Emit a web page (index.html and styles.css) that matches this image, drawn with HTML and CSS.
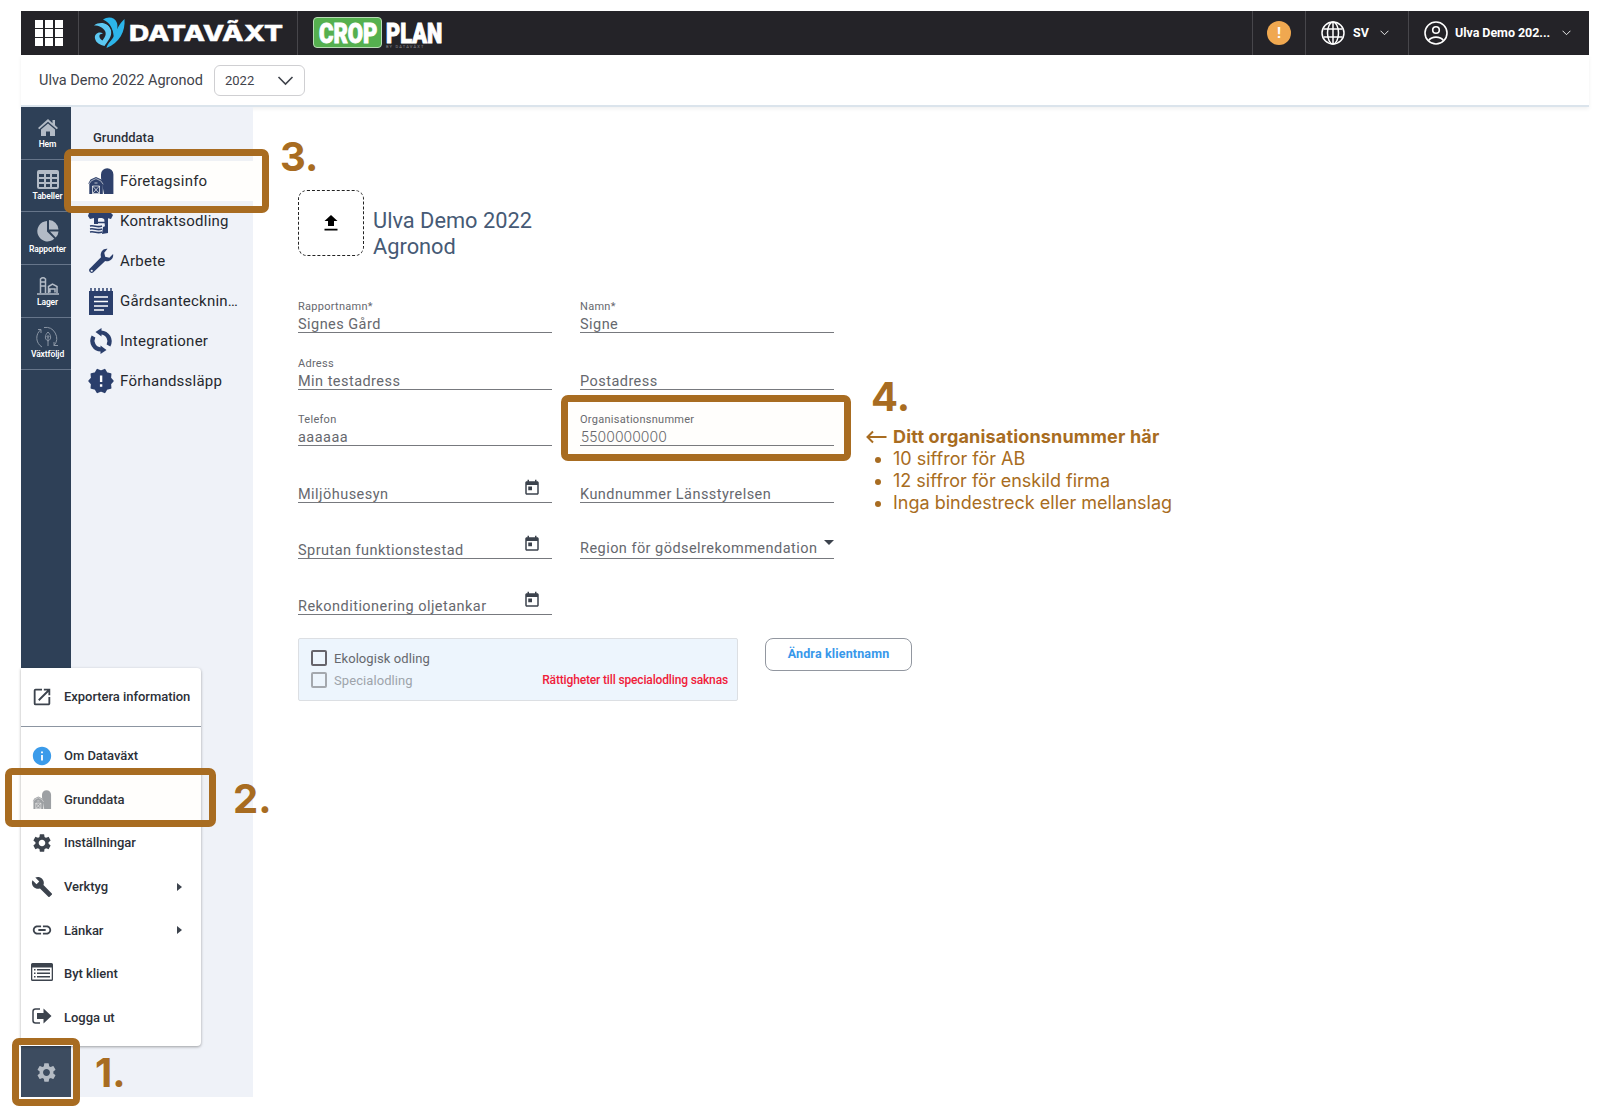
FILE: index.html
```html
<!DOCTYPE html>
<html lang="sv">
<head>
    <meta charset="UTF-8">
    <meta name="viewport" content="width=device-width, initial-scale=1.0">
    <title>Grunddata - Företagsinfo</title>
    <link rel="stylesheet" href="styles.css">
</head>
<body>
    <svg class="sprite" width="0" height="0">
        <symbol id="barn" viewBox="0 0 26 26">
            <path d="M13 10V6.500a6.200 6.200 0 0 1 12.400 0V26H16z"/>
            <path d="M.3 15.500 2.500 11.500 8 9l5.500 2.500 2.200 4-.9.700V26H1.300v-9.800z"/>
            <path d="M.8 16.300 3.300 12.800 8 10.600l4.700 2.200 2.500 3.500" fill="none" stroke="#fff" stroke-width=".6"/>
            <path d="M4.500 18h7v7.500h-7zl7 7.500m0-7.500-7 7.500M6.500 15h3" fill="none" stroke="#fff" stroke-width=".7"/>
        </symbol>
        <symbol id="gear" viewBox="0 0 24 24">
            <path d="M19.140 12.940c.04-.3.060-.61.060-.94 0-.32-.02-.64-.07-.94l2.030-1.580a.49.49 0 0 0 .12-.61l-1.920-3.320a.488.488 0 0 0-.59-.22l-2.390.96c-.5-.38-1.030-.7-1.620-.94l-.36-2.540a.484.484 0 0 0-.48-.41h-3.840c-.24 0-.43.17-.47.41l-.36 2.540c-.59.24-1.130.57-1.620.94l-2.390-.96c-.22-.08-.47 0-.59.22L2.740 8.870c-.12.21-.08.47.12.61l2.030 1.580c-.05.3-.09.63-.09.94s.02.64.07.94l-2.030 1.580a.49.49 0 0 0-.12.61l1.920 3.320c.12.22.37.29.59.22l2.390-.96c.5.38 1.030.7 1.620.94l.36 2.540c.05.24.24.41.48.41h3.840c.24 0 .44-.17.47-.41l.36-2.540c.59-.24 1.130-.56 1.620-.94l2.390.96c.22.08.47 0 .59-.22l1.920-3.320c.12-.22.07-.47-.12-.61l-2.010-1.580zM12 15.600c-1.980 0-3.600-1.620-3.600-3.600s1.620-3.600 3.600-3.600 3.600 1.620 3.600 3.600-1.620 3.600-3.600 3.600z"/>
        </symbol>
        <symbol id="calendar" viewBox="0 0 24 24">
            <path d="M19 3h-1V1h-2v2H8V1H6v2H5c-1.110 0-1.990.9-1.990 2L3 19c0 1.100.89 2 2 2h14c1.100 0 2-.9 2-2V5c0-1.100-.9-2-2-2zm0 16H5V8h14v11zM7 10h5v5H7z"/>
        </symbol>
        <symbol id="chevron" viewBox="0 0 16 10">
            <path d="M1 1l7 7 7-7" fill="none" stroke="currentColor" stroke-width="1.600"/>
        </symbol>
    </svg>

    <div class="app">
        <header class="topbar">
            <div class="apps">
                <i></i><i></i><i></i><i></i><i></i><i></i><i></i><i></i><i></i>
            </div>
            <div class="brand">
                <svg width="190" height="34" viewBox="0 0 190 34">
                    <g fill="#2cb5ea">
                        <path d="M9 3.500C14 0 21 1 23 7c1.500 5.500-1 11-3 16.500C19.500 14 17 7 9 3.500z"/>
                        <path d="M30.500 3c1 12-5 24-18 29 1-5 5-7 7.500-12C22 15 25 8 30.500 3z"/>
                        <path d="M0 9.500C6 5 15 7 17 14c1.500 7-3.500 11-6.500 16-4.500-1-8.500-3-9.500-7.500C0 18 5 15 9 17.500c-3 .3-4 1.500-3.500 3.500.3 1.500 1.500 2.500 3 3.500 3-4 4-6.500 2.500-9.500C9 11.500 5 9.500 0 9.500z" fill="#5cc8f2"/>
                        <path d="M8 5.500c7 2 11 8 10.500 15" fill="none" stroke="#242328" stroke-width="1"/>
                    </g>
                    <text class="brand-name" x="35" y="24.500" textLength="154" lengthAdjust="spacingAndGlyphs">DATAVÃXT</text>
                </svg>
            </div>
            <div class="product">
                <div class="crop"><svg width="61" height="29" viewBox="0 0 61 29"><text class="product-name" transform="scale(.74 1)" x="0" y="24.500" textLength="79" lengthAdjust="spacingAndGlyphs">CROP</text></svg></div>
                <div class="plan">
                    <svg width="60" height="27" viewBox="0 0 60 27"><text class="product-name" transform="scale(.74 1)" x="0" y="25.500" textLength="76" lengthAdjust="spacingAndGlyphs">PLAN</text></svg>
                    <span>BY DATAVÄXT</span>
                </div>
            </div>
            <div class="spacer"></div>
            <div class="alert-cell"><span class="alert">!</span></div>
            <div class="lang">
                <svg width="24" height="24" viewBox="0 0 24 24" fill="none" stroke="#fff" stroke-width="1.500">
                    <circle cx="12" cy="12" r="11"/>
                    <ellipse cx="12" cy="12" rx="5.500" ry="11"/>
                    <path d="M12 1v22M2.500 8h19M2.500 16h19"/>
                </svg>
                <span>SV</span>
                <svg class="chev" width="9" height="6"><use href="#chevron"/></svg>
            </div>
            <div class="user">
                <svg width="24" height="24" viewBox="0 0 24 24" fill="none" stroke="#fff" stroke-width="1.600">
                    <circle cx="12" cy="12" r="11"/>
                    <circle cx="12" cy="9" r="3.300"/>
                    <path d="M4.500 19.500c3.500-4.500 11.500-4.500 15 0"/>
                </svg>
                <span>Ulva Demo 202...</span>
                <svg class="chev" width="9" height="6"><use href="#chevron"/></svg>
            </div>
        </header>

        <div class="subbar">
            <span>Ulva Demo 2022 Agronod</span>
            <div class="year">2022 <svg width="17" height="10"><use href="#chevron"/></svg></div>
        </div>

        <div class="main">
            <nav class="rail">
                <a class="rail-item">
                    <svg width="20" height="18" viewBox="0 0 20 18"><path d="M10 0 0 9l1.300 1.300L10 2.700l8.700 7.600L20 9l-3-2.700V1h-2.500v3.200z"/><path d="M3 10.500 10 4.500l7 6V17h-5v-4.500H8V17H3z"/></svg>
                    <span>Hem</span>
                </a>
                <a class="rail-item">
                    <svg width="22" height="19" viewBox="0 0 22 19" fill-rule="evenodd"><path d="M2 0h18q2 0 2 2v15q0 2-2 2H2q-2 0-2-2V2q0-2 2-2zM2 4v3h5V4zm7 0v3h4V4zm6 0v3h5V4zM2 9v3h5V9zm7 0v3h4V9zm6 0v3h5V9zM2 14v3h5v-3zm7 0v3h4v-3zm6 0v3h5v-3z"/></svg>
                    <span>Tabeller</span>
                </a>
                <a class="rail-item">
                    <svg width="22" height="22" viewBox="0 0 22 22"><path d="M10 1v10.500l7.300 7.300A10.200 10.200 0 1 1 10 1z"/><path d="M12 0a10 10 0 0 1 9.500 9.500H12z"/><path d="M13 11.500h8.500a9 9 0 0 1-2.800 6z"/></svg>
                    <span>Rapporter</span>
                </a>
                <a class="rail-item">
                    <svg width="22" height="18" viewBox="0 0 22 18" fill="none" stroke="#b3bbc6" stroke-width="1.500"><path d="M0 17h22M3.500 16V2q2.500-2.500 5 0v14M3.500 5h5M3.500 9h5M11.500 16V9.500l4-2.500 4.500 2.500V16M13 15.500v-3.500h5v3.500"/></svg>
                    <span>Lager</span>
                </a>
                <a class="rail-item dim">
                    <svg width="24" height="24" viewBox="0 0 24 24" fill="none" stroke="#b3bbc6" stroke-width="1"><path d="M5 3.500A10.500 10.500 0 0 0 6 21M8 1.500a11 11 0 0 1 10 18M18 19.500v-3.500m0 3.500h4M5 3.500H2m3 0V7M12 20v-6M12 15c-4-2-3-6 0-9 3 3 4 7 0 9zM12 9v6M10.500 10l1.500 1.500 1.500-1.500"/></svg>
                    <span>Växtföljd</span>
                </a>
                <a class="rail-settings"><svg width="23" height="23"><use href="#gear"/></svg></a>
            </nav>

            <aside class="subnav">
                <h2>Grunddata</h2>
                <a class="active"><svg width="26" height="26"><use href="#barn"/></svg>Företagsinfo</a>
                <a>
                    <svg width="26" height="26" viewBox="0 0 26 26"><path d="M1 5 6 1l5 2 5-2 5 2 4 4-2 4-4-1-1 2-4-2h-3l-3 2-2-2-4 1-2-3z"/><path d="M6 10h4v6H6zm10-1h4v9l-3 1z"/><path d="M9 14.500h8" stroke="#2b3f6c" stroke-width="1.500"/><path d="M2 18c5-1 7 2 12 0M2 21c5-1 7 2 12 0M2 24c5-1 7 2 12 0" fill="none" stroke="#2b3f6c" stroke-width="1.600"/><path d="M15 19l5-2v8l-6 1z"/></svg>
                    Kontraktsodling
                </a>
                <a>
                    <svg width="28" height="28" viewBox="0 0 28 28"><path d="M27 6.500c1 5-4 9-8.500 7.500L5.500 26.500a3 3 0 0 1-4-4L14 10C12.500 5 16 0 21 .8L17.500 5l1 4.500 4.500 1z"/><circle cx="4" cy="24.500" r="1.200" fill="#eff2f8"/></svg>
                    Arbete
                </a>
                <a>
                    <svg width="26" height="28" viewBox="0 0 26 28"><path d="M1 4h24v24H1z"/><path d="M3 1v4M7 1v4M11 1v4M15 1v4M19 1v4M23 1v4" stroke="#2b3f6c" stroke-width="1.500"/><path d="M6 10h14M6 14.500h14M6 19h14M6 23h10" stroke="#fff" stroke-width="1.500"/></svg>
                    Gårdsantecknin…
                </a>
                <a>
                    <svg width="26" height="26" viewBox="0 0 26 26"><path d="M13 4.500A8.800 8.800 0 0 1 20.500 17.500M13 21.500A8.800 8.800 0 0 1 5.500 8.500" fill="none" stroke="#2b3f6c" stroke-width="4.200"/><path d="M13.500 0v8.500L7.500 4zM12.500 26v-8.500l6 4.500z"/></svg>
                    Integrationer
                </a>
                <a>
                    <svg width="26" height="26" viewBox="0 0 24 24"><path d="m23 12-2.440-2.780.34-3.680-3.610-.82-1.890-3.180L12 3 8.600 1.540 6.710 4.720l-3.610.81.34 3.680L1 12l2.440 2.780-.34 3.690 3.610.82 1.890 3.180L12 21l3.400 1.460 1.890-3.180 3.610-.82-.34-3.680z" stroke="#2b3f6c" stroke-width="1.500" stroke-linejoin="round"/><path d="M11 7h2.200v6H11zm0 8h2.200v2.200H11z" fill="#fff"/></svg>
                    Förhandssläpp
                </a>
            </aside>

            <main class="content">
                <div class="company">
                    <div class="upload"><svg width="14" height="17" viewBox="0 0 14 17"><path d="M4 11V6H.5L7 0l6.500 6H10v5zM.5 13.700h13v1.800H.5z"/></svg></div>
                    <h1>Ulva Demo 2022 Agronod</h1>
                </div>

                <div class="form">
                    <div class="field"><label>Rapportnamn*</label><span>Signes Gård</span></div>
                    <div class="field"><label>Namn*</label><span>Signe</span></div>
                    <div class="field"><label>Adress</label><span>Min testadress</span></div>
                    <div class="field"><span>Postadress</span></div>
                    <div class="field"><label>Telefon</label><span>aaaaaa</span></div>
                    <div class="field"><label>Organisationsnummer</label><span class="orgnr">5500000000</span></div>
                    <div class="field date"><span>Miljöhusesyn</span><svg width="18" height="18"><use href="#calendar"/></svg></div>
                    <div class="field"><span>Kundnummer Länsstyrelsen</span></div>
                    <div class="field date"><span>Sprutan funktionstestad</span><svg width="18" height="18"><use href="#calendar"/></svg></div>
                    <div class="field select"><span>Region för gödselrekommendation</span><i class="caret"></i></div>
                    <div class="field date"><span>Rekonditionering oljetankar</span><svg width="18" height="18"><use href="#calendar"/></svg></div>
                </div>

                <div class="bottom">
                    <div class="options">
                        <div class="option"><i class="box"></i><span>Ekologisk odling</span></div>
                        <div class="option disabled"><i class="box"></i><span>Specialodling</span><em>Rättigheter till specialodling saknas</em></div>
                    </div>
                    <button class="rename">Ändra klientnamn</button>
                </div>
            </main>
        </div>
    </div>

    <!-- settings menu opened from the gear button -->
    <div class="menu">
        <a class="export"><svg width="22" height="22" viewBox="0 0 24 24"><path d="M19 19H5V5h7V3H5a2 2 0 0 0-2 2v14a2 2 0 0 0 2 2h14c1.100 0 2-.9 2-2v-7h-2v7zM14 3v2h3.590l-9.830 9.830 1.410 1.410L19 6.410V10h2V3h-7z"/></svg>Exportera information</a>
        <a><svg width="22" height="22" viewBox="0 0 24 24" fill="#3b9bea"><path d="M12 2C6.480 2 2 6.480 2 12s4.480 10 10 10 10-4.480 10-10S17.520 2 12 2zm1 15h-2v-6h2v6zm0-8h-2V7h2v2z"/></svg>Om Dataväxt</a>
        <a><svg class="faded" width="22" height="19"><use href="#barn"/></svg>Grunddata</a>
        <a><svg width="22" height="22"><use href="#gear"/></svg>Inställningar</a>
        <a><svg width="22" height="22" viewBox="0 0 24 24"><path d="m22.700 19-9.100-9.100c.9-2.300.4-5-1.500-6.900-2-2-5-2.400-7.400-1.300L9 6 6 9 1.600 4.700C.4 7.100.9 10.100 2.900 12.100c1.900 1.900 4.600 2.400 6.900 1.500l9.100 9.100c.4.400 1 .4 1.400 0l2.300-2.300c.5-.4.5-1.100.1-1.400z"/></svg>Verktyg<i class="more"></i></a>
        <a><svg width="22" height="22" viewBox="0 0 24 24"><path d="M3.900 12c0-1.710 1.390-3.100 3.100-3.100h4V7H7c-2.760 0-5 2.240-5 5s2.240 5 5 5h4v-1.900H7c-1.710 0-3.100-1.390-3.100-3.100zM8 13h8v-2H8v2zm9-6h-4v1.900h4c1.710 0 3.100 1.390 3.100 3.100s-1.390 3.100-3.100 3.100h-4V17h4c2.760 0 5-2.240 5-5s-2.240-5-5-5z"/></svg>Länkar<i class="more"></i></a>
        <a><svg class="list" width="22" height="18" viewBox="0 0 22 18"><path fill-rule="evenodd" d="M1.500 0h19Q22 0 22 1.500v15q0 1.500-1.500 1.500h-19Q0 18 0 16.500v-15Q0 0 1.500 0zM1.300 4.500v12h19.400v-12z"/><path d="M3 6h1.500v1.500H3zm3 0h13v1.500H6zM3 9.500h1.500V11H3zm3 0h13V11H6zM3 13h1.500v1.500H3zm3 0h13v1.500H6z"/></svg>Byt klient</a>
        <a><svg class="list" width="20" height="16" viewBox="0 0 20 16"><path d="M8 1H3.500Q1 1 1 3.500v9Q1 15 3.500 15H8" fill="none" stroke="#3c434d" stroke-width="1.500"/><path d="M5 5h6.500V.5L19.500 8l-8 7.500V11H5z"/></svg>Logga ut</a>
    </div>

    <!-- step-by-step annotations -->
    <div class="frame frame-1"></div>
    <div class="frame frame-2"></div>
    <div class="frame frame-3"></div>
    <div class="frame frame-4"></div>
    <div class="step step-1">1.</div>
    <div class="step step-2">2.</div>
    <div class="step step-3">3.</div>
    <div class="step step-4">4.</div>
    <div class="note">
        <strong><svg width="21" height="14" viewBox="0 0 21 14"><path d="M20.500 7H1.500M7 1.500 1.500 7 7 12.500" fill="none" stroke="#a86c21" stroke-width="2"/></svg>Ditt organisationsnummer här</strong>
        <ul>
            <li>10 siffror för AB</li>
            <li>12 siffror för enskild firma</li>
            <li>Inga bindestreck eller mellanslag</li>
        </ul>
    </div>
</body>
</html>
```
FILE: styles.css
```css
* {
    box-sizing: border-box;
}

body {
    margin: 0;
    padding: 11px 11px 12px 21px;
    height: 1109px;
    overflow: hidden;
    background: #fff;
    font-family: Roboto, sans-serif;
    color: #2c3038;
    position: relative;
}

.sprite {
    position: absolute;
}

.app {
    height: 1086px;
    display: flex;
    flex-direction: column;
}

/* top bar */
.topbar {
    height: 44px;
    flex: none;
    display: flex;
    background: #242328;
    color: #fff;
    font-size: 13px;
    font-weight: 700;
}

.topbar > div {
    display: flex;
    align-items: center;
    padding-bottom: 1px;
}

.topbar .apps {
    width: 58px;
    display: grid;
    grid-template-columns: repeat(3, 8px);
    grid-template-rows: repeat(3, 8px);
    gap: 1px 2px;
    align-items: stretch;
    align-content: center;
    justify-content: center;
    padding: 0 2px 0 0;
    border-right: 1px solid #47464b;
}

.apps i {
    background: #fff;
}

.brand {
    width: 219px;
    padding-left: 15px;
    border-right: 1px solid #47464b;
}

.brand-name {
    font: 800 21px Inter, sans-serif;
    fill: #fff;
    stroke: #fff;
    stroke-width: 0.4;
}

.product {
    padding-left: 15px;
    gap: 4px;
}

.product svg {
    overflow: visible;
}

.crop {
    width: 69px;
    height: 31px;
    padding: 0 0 0 5px;
    background: #55b04f;
    border: 1px solid #b9dcb6;
    border-radius: 4px;
}

.plan {
    height: 31px;
    display: flex;
    flex-direction: column;
}

.plan span {
    font-size: 4px;
    line-height: 5px;
    font-weight: 400;
    letter-spacing: 1.2px;
    color: #8c8b90;
}

.product-name {
    font: 900 28px Roboto, sans-serif;
    fill: #fff;
    stroke: #fff;
    stroke-width: 1;
}

.topbar .spacer {
    flex: 1;
}

.alert-cell,
.lang,
.user {
    border-left: 1px solid #47464b;
}

.alert-cell {
    width: 53px;
    justify-content: center;
}

.alert {
    width: 24px;
    height: 24px;
    border-radius: 50%;
    background: #f0a850;
    font-size: 15px;
    line-height: 24px;
    text-align: center;
}

.lang {
    width: 103px;
    padding-left: 15px;
}

.lang span {
    margin: 0 11px 0 8px;
    font-size: 12.5px;
}

.user {
    width: 181px;
    padding-left: 15px;
}

.user span {
    width: 95px;
    margin: 0 12px 0 7px;
    font-size: 12.5px;
    letter-spacing: -0.05px;
    white-space: nowrap;
}

.subbar {
    height: 52px;
    flex: none;
    display: flex;
    align-items: center;
    padding: 1px 0 0 18px;
    border-bottom: 2px solid #dbe4ec;
    box-shadow: 0 2px 4px rgba(0, 0, 0, 0.06);
    font-size: 14.5px;
    color: #3f434b;
}

.subbar > span {
    letter-spacing: -0.02px;
}

.year {
    width: 91px;
    height: 31px;
    margin-left: 11px;
    padding: 0 10px 0 10px;
    display: flex;
    align-items: center;
    justify-content: space-between;
    border: 1px solid #cfcfd2;
    border-radius: 6px;
    font-size: 13px;
}

.main {
    flex: 1;
    display: flex;
}

/* left rail */
.rail {
    width: 50px;
    display: flex;
    flex-direction: column;
    background: #2e4057;
}

.rail-item {
    height: 52.7px;
    display: flex;
    flex-direction: column;
    align-items: center;
    justify-content: flex-end;
    padding: 0 0 10px 3px;
    border-bottom: 1px solid #66758a;
    color: #fff;
    font-size: 8.5px;
    line-height: 10px;
    font-weight: 600;
    gap: 2px;
    fill: #b3bbc6;
    letter-spacing: -0.1px;
}

.rail-item.dim svg {
    opacity: 0.7;
    margin-bottom: -3px;
}

.rail-settings {
    height: 51px;
    margin-top: auto;
    display: flex;
    align-items: center;
    justify-content: center;
    padding-top: 2px;
    background: #3a4a60;
    border-radius: 0 0 0 4px;
    fill: #b3bbc6;
}

.subnav {
    width: 182px;
    background: #eff2f8;
}

.subnav h2 {
    margin: 0;
    height: 54px;
    padding: 22px 0 0 22px;
    font-size: 13px;
    line-height: 18px;
    font-weight: 500;
    letter-spacing: 0;
}

.subnav a {
    height: 40px;
    display: flex;
    align-items: center;
    padding-left: 17px;
    font-size: 15px;
    letter-spacing: 0.24px;
    color: #25282e;
    fill: #2b3f6c;
    white-space: nowrap;
}

.subnav a svg {
    width: 26px;
    margin-right: 6px;
    flex: none;
}

.subnav a.active {
    background: #fff;
}

/* company form */
.content {
    padding: 83px 0 0 45px;
}

.company {
    display: flex;
    gap: 9px;
}

.upload {
    width: 66px;
    height: 66px;
    display: flex;
    align-items: center;
    justify-content: center;
    border: 1px dashed #222;
    border-radius: 9px;
}

.company h1 {
    width: 190px;
    margin: 18px 0 0;
    font-size: 21.8px;
    line-height: 25.5px;
    font-weight: 400;
    color: #465a75;
}

.form {
    margin-top: 18px;
    display: grid;
    grid-template-columns: 254px 254px;
    grid-auto-rows: 56.4px;
    column-gap: 28px;
}

.field {
    display: flex;
    flex-direction: column;
    justify-content: flex-end;
    border-bottom: 1px solid #77797e;
    color: #66686e;
    font-size: 14.5px;
    line-height: 15px;
    letter-spacing: 0.46px;
}

.field label {
    margin-bottom: 3px;
    font-size: 11px;
    line-height: 15px;
    letter-spacing: 0.28px;
}

.field .orgnr {
    font-family: Inter, sans-serif;
    font-weight: 300;
    font-size: 14px;
    line-height: 17px;
    margin-top: -2px;
    letter-spacing: 0;
    padding-left: 1px;
}

.field.date,
.field.select {
    flex-direction: row;
    justify-content: space-between;
    align-items: flex-end;
}

.field.date svg {
    margin: 0 11px 5px 0;
    fill: #3c434d;
}

.field.select span {
    margin-bottom: 2px;
    white-space: nowrap;
}

.caret {
    border: 5px solid transparent;
    border-top-color: #3c434d;
    border-bottom: 0;
    margin-bottom: 13px;
}

.bottom {
    display: flex;
    gap: 27px;
    margin-top: 23px;
}

.options {
    width: 440px;
    height: 63px;
    padding: 8px 9px 0 12px;
    background: #edf5fd;
    border: 1px solid #dcdfe3;
    border-radius: 2px;
}

.option {
    height: 22px;
    display: flex;
    align-items: center;
    gap: 7px;
    font-size: 13px;
    letter-spacing: 0.08px;
    color: #66686e;
}

.option .box {
    width: 16px;
    height: 16px;
    border: 2px solid #66646b;
    border-radius: 2px;
}

.option.disabled {
    color: #9ea4ab;
}

.option.disabled .box {
    border-color: #a4a8ae;
}

.option em {
    margin-left: auto;
    font-style: normal;
    font-size: 12px;
    font-weight: 500;
    letter-spacing: -0.15px;
    color: #f0203a;
}

.rename {
    width: 147px;
    height: 33px;
    padding-bottom: 3px;
    background: #fff;
    border: 1px solid #9297a0;
    border-radius: 8px;
    font: 700 12.5px Roboto, sans-serif;
    letter-spacing: 0.15px;
    color: #3898ea;
}

/* popup menu */
.menu {
    position: absolute;
    left: 21px;
    top: 668px;
    width: 180px;
    height: 378px;
    background: #fff;
    border-radius: 0 4px 4px 0;
    box-shadow: 0 1px 3px rgba(0, 0, 0, 0.35);
}

.menu a {
    height: 43.6px;
    display: flex;
    align-items: center;
    padding: 0 19px 0 10px;
    font-size: 13px;
    font-weight: 500;
    letter-spacing: -0.04px;
    fill: #3c434d;
    white-space: nowrap;
}

.menu a svg {
    width: 22px;
    margin-right: 11px;
    flex: none;
}

.menu a svg.list {
    margin-bottom: 3px;
}

.menu a.export {
    height: 59px;
    padding-bottom: 1px;
    margin-bottom: 7px;
    border-bottom: 1px solid #8c95a1;
}

.menu .faded {
    opacity: 0.5;
}

.more {
    margin-left: auto;
    border: 4px solid transparent;
    border-left: 5px solid #3c434d;
    border-right: 0;
}

/* annotations */
.frame {
    position: absolute;
    border: 7px solid #a86c21;
    border-radius: 7px;
    background: rgba(255, 200, 100, 0.02);
}

.frame-1 {
    left: 12px;
    top: 1038px;
    width: 68px;
    height: 68px;
}

.frame-2 {
    left: 5px;
    top: 768px;
    width: 211px;
    height: 59px;
}

.frame-3 {
    left: 64px;
    top: 149px;
    width: 205px;
    height: 64px;
}

.frame-4 {
    left: 561px;
    top: 395px;
    width: 290px;
    height: 66px;
}

.step {
    position: absolute;
    font: 700 40px/48px Inter, sans-serif;
    color: #a86c21;
}

.step-1 {
    left: 95px;
    top: 1049px;
}

.step-2 {
    left: 233px;
    top: 775px;
}

.step-3 {
    left: 280px;
    top: 133px;
}

.step-4 {
    left: 871px;
    top: 373px;
}

.note {
    position: absolute;
    left: 866px;
    top: 426px;
    font: 18px/22px Inter, sans-serif;
    color: #a86c21;
    white-space: nowrap;
}

.note strong {
    display: flex;
    align-items: center;
    gap: 6px;
    letter-spacing: 0.18px;
}

.note ul {
    margin: 0;
    padding-left: 27px;
}
```
